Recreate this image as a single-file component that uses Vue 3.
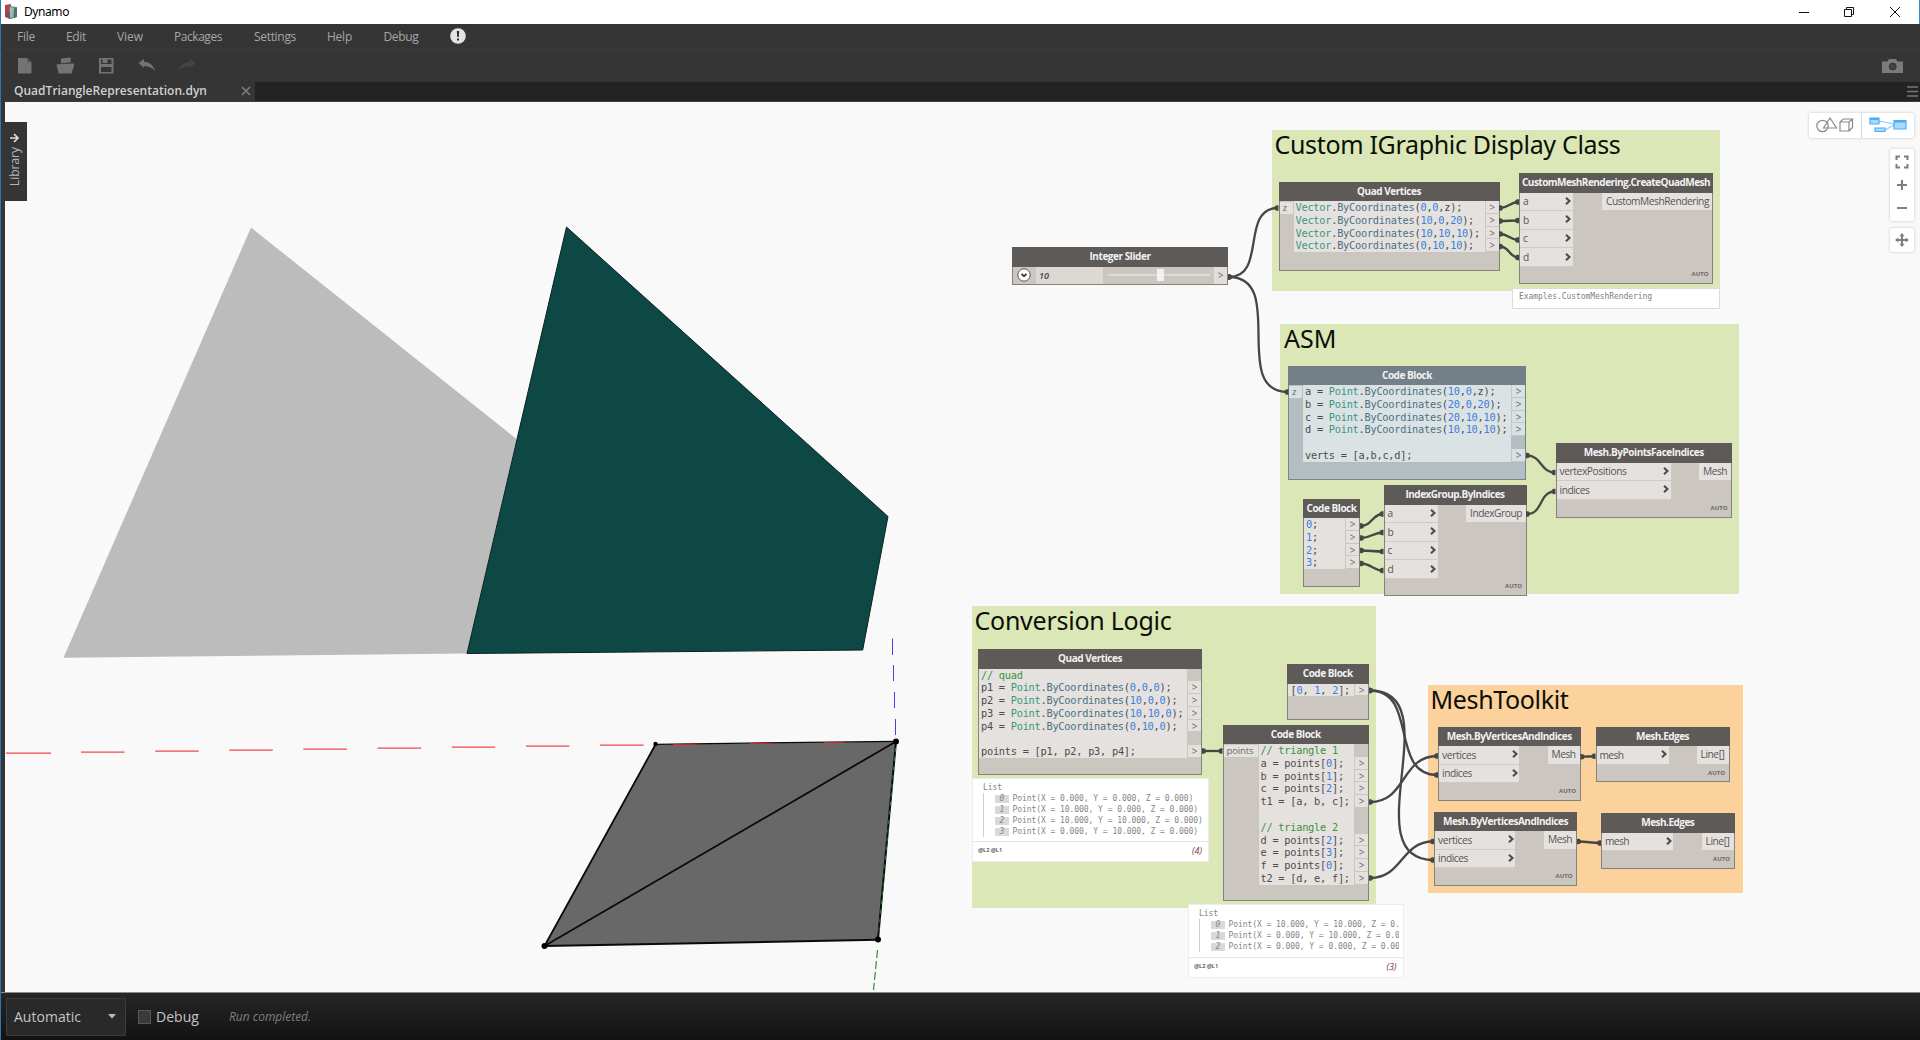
<script setup>
const TOP = 102

const vFit = {
  mounted(el, { value }) {
    if (!value) return
    const width = el.getBoundingClientRect().width
    el.style.letterSpacing = `${(value - width) / el.textContent.length}px`
  }
}

const menu = [
  { t: 'File', x: 17, w: 18 },
  { t: 'Edit', x: 66, w: 20 },
  { t: 'View', x: 117, w: 26 },
  { t: 'Packages', x: 174, w: 48 },
  { t: 'Settings', x: 254, w: 42 },
  { t: 'Help', x: 327, w: 25 },
  { t: 'Debug', x: 383.5, w: 35 }
].map((m, i, all) => ({ ...m, gap: i ? m.x - all[i - 1].x - all[i - 1].w : m.x }))

const groups = [
  { t: 'Custom IGraphic Display Class', x: 1271.5, y: 130, w: 448, h: 161, tw: 346 },
  { t: 'ASM', x: 1280, y: 324, w: 458.5, h: 270, tw: 52.5, pad: 4 },
  { t: 'Conversion Logic', x: 971.5, y: 606, w: 404.5, h: 302, tw: 197 },
  { t: 'MeshToolkit', x: 1427.5, y: 685, w: 315, h: 208, tw: 138, warm: true }
]

const codeNodes = [
  {
    t: 'Quad Vertices', tw: 64, x: 1278.5, y: 181.5, w: 221, h: 89, inW: 14, port: 'z', pad: 2,
    code: ['Vector.ByCoordinates(0,0,z);', 'Vector.ByCoordinates(10,0,20);', 'Vector.ByCoordinates(10,10,10);', 'Vector.ByCoordinates(0,10,10);'],
    outs: [1, 1, 1, 1]
  },
  {
    t: 'Code Block', tw: 50, x: 1288, y: 365.5, w: 238, h: 114.5, inW: 14, port: 'z', pad: 2, selected: true,
    code: ['a = Point.ByCoordinates(10,0,z);', 'b = Point.ByCoordinates(20,0,20);', 'c = Point.ByCoordinates(20,10,10);', 'd = Point.ByCoordinates(10,10,10);', '', 'verts = [a,b,c,d];'],
    outs: [1, 1, 1, 1, 0, 1]
  },
  { t: 'Code Block', tw: 50, x: 1303, y: 498.5, w: 57, h: 88.5, inW: 0, pad: 2, code: ['0;', '1;', '2;', '3;'], outs: [1, 1, 1, 1] },
  {
    t: 'Quad Vertices', tw: 64, x: 978, y: 649, w: 224, h: 126, inW: 0, pad: 2,
    code: ['// quad', 'p1 = Point.ByCoordinates(0,0,0);', 'p2 = Point.ByCoordinates(10,0,0);', 'p3 = Point.ByCoordinates(10,10,0);', 'p4 = Point.ByCoordinates(0,10,0);', '', 'points = [p1, p2, p3, p4];'],
    outs: [0, 1, 1, 1, 1, 0, 1]
  },
  { t: 'Code Block', tw: 50, x: 1286.5, y: 664, w: 82.5, h: 55.5, inW: 0, pad: 3, code: ['[0, 1, 2];'], outs: [1] },
  {
    t: 'Code Block', tw: 50, x: 1222.5, y: 724.5, w: 146.5, h: 176.5, inW: 35, port: 'points', pw: 27, pad: 2,
    code: ['// triangle 1', 'a = points[0];', 'b = points[1];', 'c = points[2];', 't1 = [a, b, c];', '', '// triangle 2', 'd = points[2];', 'e = points[3];', 'f = points[0];', 't2 = [d, e, f];'],
    outs: [0, 1, 1, 1, 1, 0, 0, 1, 1, 1, 1]
  }
]

const fnNodes = [
  { t: 'CustomMeshRendering.CreateQuadMesh', tw: 188, x: 1519, y: 173, w: 194, h: 110.5, inW: 52.5, ins: ['a', 'b', 'c', 'd'], out: 'CustomMeshRendering', ow: 103, outW: 110 },
  { t: 'IndexGroup.ByIndices', tw: 99, x: 1383.5, y: 485, w: 143, h: 110.5, inW: 53, ins: ['a', 'b', 'c', 'd'], out: 'IndexGroup', ow: 52, outW: 59.5 },
  { t: 'Mesh.ByPointsFaceIndices', tw: 120, x: 1555.5, y: 443, w: 176.5, h: 74.5, inW: 114, ins: ['vertexPositions', 'indices'], iw: [67, 30], out: 'Mesh', ow: 24, outW: 32 },
  { t: 'Mesh.ByVerticesAndIndices', tw: 125, x: 1438, y: 726.5, w: 142.5, h: 74, inW: 80, ins: ['vertices', 'indices'], iw: [34, 30], out: 'Mesh', ow: 24, outW: 32 },
  { t: 'Mesh.Edges', tw: 53, x: 1595.5, y: 726.5, w: 134, h: 55.5, inW: 72, ins: ['mesh'], iw: [24], out: 'Line[]', ow: 24, outW: 32 },
  { t: 'Mesh.ByVerticesAndIndices', tw: 125, x: 1434, y: 811.5, w: 143, h: 74, inW: 80, ins: ['vertices', 'indices'], iw: [34, 30], out: 'Mesh', ow: 24, outW: 32 },
  { t: 'Mesh.Edges', tw: 53, x: 1601, y: 813, w: 133.5, h: 55.5, inW: 71, ins: ['mesh'], iw: [24], out: 'Line[]', ow: 24, outW: 32 }
]

const lists = [
  {
    x: 972, y: 778, w: 237, h: 84, n: '(4)',
    rows: ['Point(X = 0.000, Y = 0.000, Z = 0.000)', 'Point(X = 10.000, Y = 0.000, Z = 0.000)', 'Point(X = 10.000, Y = 10.000, Z = 0.000)', 'Point(X = 0.000, Y = 10.000, Z = 0.000)']
  },
  {
    x: 1188, y: 904, w: 215.5, h: 73.500, n: '(3)',
    rows: ['Point(X = 10.000, Y = 10.000, Z = 0.000)', 'Point(X = 0.000, Y = 10.000, Z = 0.000)', 'Point(X = 0.000, Y = 0.000, Z = 0.000)']
  }
]

const wires = [
  [1229, 277, 1278, 208], [1229, 277, 1288, 392],
  [1500, 208, 1518.5, 202], [1500, 221, 1518.5, 220.5], [1500, 234, 1518.5, 240], [1500, 246.5, 1518.5, 257.5],
  [1361, 526, 1383, 514], [1361, 538, 1383, 532.5], [1361, 550.5, 1383, 551.5], [1361, 563.5, 1383, 570.5],
  [1527, 455.5, 1555, 472.5], [1527, 514, 1555, 491.5],
  [1203, 751, 1222, 751],
  [1370, 690.5, 1437.5, 775], [1370, 690.5, 1433.5, 860],
  [1370, 802, 1437.5, 756], [1370, 878, 1433.5, 841.5],
  [1581.5, 756.7, 1595, 756.3], [1578, 841.5, 1600.5, 843]
]

const wirePath = ([x1, y1, x2, y2]) => {
  const d = Math.hypot(x2 - x1, y2 - y1) * 0.45
  return `M${x1} ${y1}C${x1 + d} ${y1} ${x2 - d} ${y2} ${x2} ${y2}`
}

const capPath = ([x1, y1, x2, y2]) =>
  `M${x1 - 1} ${y1 - 2.7}h1.3a2.7 2.7 0 0 1 0 5.4h-1.3zM${x2 + 0.5} ${y2 - 2.7}h-1.3a2.7 2.7 0 0 0 0 5.4h1.3z`

const redDashes = Array.from({ length: 9 }, (_, i) => ({
  x1: i ? 81 + (i - 1) * 74.15 : 6,
  x2: i ? 124.5 + (i - 1) * 74.15 : 51,
  y: 753.5 - i
}))

const tokens = (line) =>
  (line.match(/\/\/.*|\b\d+\b|\bPoint\b|\bVector\b|ByCoordinates|\w+|[^\w]/g) || []).map((s) => ({
    s,
    c: s.startsWith('//') ? 'cm' : /^\d+$/.test(s) ? 'num' : s === 'Point' || s === 'Vector' ? 'cls' : s === 'ByCoordinates' ? 'fn' : ''
  }))

const box = (o) => ({ left: `${o.x}px`, top: `${o.y - TOP}px`, width: `${o.w}px`, height: `${o.h}px` })
const px = (n) => ({ width: `${n}px` })
</script>

<template>
  <div class="app">
    <header class="titlebar">
      <svg class="logo" width="13" height="16" viewBox="0 0 13 16">
        <path d="M0 1l6-1v15l-6-2z" fill="#b9423f" />
        <path d="M4 2l8 1v10l-6 2-2-2z" fill="#5f8d86" />
        <path d="M5 3l4 1-1 9-3 1z" fill="#9dbcae" />
        <path d="M1 9l4-1v7l-4-2z" fill="#7c4d63" />
        <path d="M9 4l3 0v9l-3 1z" fill="#54716f" />
      </svg>
      <span v-fit="45" class="app-name">Dynamo</span>
      <span class="grow"></span>
      <svg class="win" width="102" height="12" viewBox="0 0 102 12" fill="none" stroke="#111">
        <path d="M0 6.500h10" />
        <path d="M45.500 3.500h7v7h-7zM47.500 3.500v-2h7v7h-2" />
        <path d="M91 1l10 10M101 1L91 11" />
      </svg>
    </header>

    <nav class="menubar">
      <span v-for="m in menu" :key="m.t" class="menu-slot" :style="{ paddingLeft: m.gap + 'px', width: m.gap + m.w + 'px' }">
        <span v-fit="m.w">{{ m.t }}</span>
      </span>
      <svg class="alert" width="16" height="16" viewBox="0 0 16 16">
        <circle cx="8" cy="8" r="7.800" fill="#e3e3e3" />
        <path d="M6.800 3h2.400l-.4 6H7.200zM7 10.400h2v2H7z" fill="#2e2e2e" />
      </svg>
    </nav>

    <div class="toolbar">
      <svg width="180" height="18" viewBox="17 57 180 18" fill="#737373">
        <path d="M18 58h9l4.500 4.500V73.500H18z" />
        <path d="M27.300 58v4.300h4.200z" fill="#555" />
        <path d="M61 58.500l9.500-1 .5 5-10 1z" />
        <path d="M56.500 64.500l4-.5 13.500-.5V66l-2.500 7.500H58.500z" />
        <path d="M60 63.600l11-.8" stroke="#444" stroke-width=".7" />
        <path fill-rule="evenodd" d="M99 58h14.500v15.500H99zM101 59.500v4.500h10.500v-4.500zM101 67v5h10.500v-5z" />
        <path d="M102.500 59h5v4h-5z" />
        <path d="M138.500 63l5.500-4v2.700c6 .3 9.500 4 11.500 9.800-3-3.800-6.500-5.300-11.500-5.300V68z" />
        <path d="M195.500 63l-5.500-4v2.700c-6 .3-9.500 4-11.500 8.300 3-2.300 6.500-3.800 11.500-3.800V68z" fill="#444" />
      </svg>
      <span class="grow"></span>
      <svg class="camera" width="22" height="15" viewBox="0 0 22 15">
        <path d="M0 2.500h5.500L7 0h7l1.500 2.500H21V14H0z" fill="#7b7b7b" />
        <circle cx="10.700" cy="7.500" r="3.800" fill="#353535" />
        <circle cx="10.700" cy="7.500" r="2.600" fill="#444" />
      </svg>
    </div>

    <div class="tabs">
      <div class="tab">
        <span v-fit="193">QuadTriangleRepresentation.dyn</span>
        <svg width="10" height="10" viewBox="0 0 10 10"><path d="M1 1l8 8M9 1L1 9" stroke="#7d7d7d" stroke-width="1.600" /></svg>
      </div>
      <span class="grow"></span>
      <svg class="burger" width="11" height="11" viewBox="0 0 11 11"><path d="M0 1h11M0 5.500h11M0 10h11" stroke="#777" stroke-width="1.500" /></svg>
    </div>

    <main class="canvas">
      <svg class="scene" width="1920" height="890" viewBox="0 102 1920 890">
        <path d="M251 227.500L516.500 439 467 653.500 63.500 657.700z" fill="#bcbcbc" />
        <path d="M566.500 227L888 516.500 862.700 650 467 653.500z" fill="#0d4844" stroke="#0a2322" stroke-width="1" />
        <path d="M655.500 744.500L896 741.500 878 939.500 544.500 946z" fill="#686868" />
        <g fill="none" stroke="#0a0a0a">
          <path d="M655.500 744.500L544.500 946M544.500 946L896 741.500" stroke-width="1.800" />
          <path d="M544.500 946L878 939.800" stroke-width="2" />
          <path d="M655.500 744.300L896 741.300" stroke-width="1.200" />
          <path d="M896 741.500L878 939.500" stroke-width="2" />
        </g>
        <path d="M895.500 748L878.500 936" stroke="#1f8a2a" stroke-width="1" stroke-dasharray="4 5" />
        <path d="M877.500 950L873.500 990" stroke="#2c8f37" stroke-width="1.200" stroke-dasharray="8 3" />
        <g stroke="#f0484a" stroke-width="1.200">
          <path v-for="d in redDashes" :key="d.x1" :d="`M${d.x1} ${d.y - 0.3}H${d.x2}`" />
          <path d="M673 744.500h24M750 743.500h21M824 742.500h21" stroke="#d81f22" />
        </g>
        <path d="M892.500 638.500v16.500M893.500 665v16M894.500 692v16M895.500 719v16" stroke="#4a42e0" />
        <circle cx="655.500" cy="744" r="2.200" />
        <circle cx="896" cy="741.500" r="3" />
        <circle cx="878" cy="939.500" r="3" />
        <circle cx="544.500" cy="946" r="3" />
      </svg>

      <section v-for="g in groups" :key="g.t" class="group" :class="{ warm: g.warm }" :style="box(g)">
        <h2 :style="{ paddingLeft: (g.pad || 3) + 'px' }"><span v-fit="g.tw">{{ g.t }}</span></h2>
      </section>

      <div class="preview" :style="box({ x: 1511.5, y: 287.5, w: 208, h: 21 })">
        <span v-fit="133">Examples.CustomMeshRendering</span>
      </div>

      <article v-for="(l, i) in lists" :key="i" class="list" :style="box(l)">
        <div class="list-body">
          <div class="list-title">List</div>
          <div class="list-rows">
            <div v-for="(r, k) in l.rows" :key="k" class="list-row"><i>{{ k }}</i><span>{{ r }}</span></div>
          </div>
        </div>
        <div class="list-foot"><b>@L2 @L1</b><em>{{ l.n }}</em></div>
      </article>

      <svg class="scene" width="1920" height="890" viewBox="0 102 1920 890">
        <path v-for="(w, i) in wires" :key="i" :d="wirePath(w)" fill="none" stroke="#464644" stroke-width="2.300" />
      </svg>

      <article class="node" :style="box({ x: 1012, y: 247, w: 216, h: 37.5 })">
        <h3><span v-fit="61">Integer Slider</span></h3>
        <div class="slider">
          <svg class="expander" width="14" height="14" viewBox="0 0 14 14">
            <circle cx="7" cy="7" r="6.200" fill="#fff" stroke="#555" />
            <path d="M4.500 6l2.500 2.200L9.500 6" fill="none" stroke="#333" stroke-width="1.700" />
          </svg>
          <span class="value">10</span>
          <span class="track"><span class="thumb"></span></span>
          <span class="out-port">&gt;</span>
        </div>
      </article>

      <article v-for="(n, i) in codeNodes" :key="'c' + i" class="node" :class="{ selected: n.selected }" :style="box(n)">
        <h3><span v-fit="n.tw">{{ n.t }}</span></h3>
        <div class="code-body">
          <div v-if="n.inW" class="code-in" :style="px(n.inW)"><div><span v-fit="n.pw || 0">{{ n.port }}</span></div></div>
          <div class="code">
            <div v-for="(line, k) in n.code" :key="k" class="line" :style="{ paddingLeft: n.pad + 'px' }"><span v-for="(t, j) in tokens(line)" :key="j" :class="t.c">{{ t.s }}</span></div>
          </div>
          <div class="code-out">
            <span v-for="(o, k) in n.outs" :key="k" :class="{ blank: !o }">{{ o ? '>' : '' }}</span>
          </div>
        </div>
      </article>

      <article v-for="(n, i) in fnNodes" :key="'f' + i" class="node" :style="box(n)">
        <h3><span v-fit="n.tw">{{ n.t }}</span></h3>
        <div class="fn-body">
          <div class="ins" :style="px(n.inW)">
            <div v-for="(p, k) in n.ins" :key="p" class="in">
              <span v-fit="n.iw ? n.iw[k] : 0">{{ p }}</span>
              <svg width="6" height="8" viewBox="0 0 6 8"><path d="M1 .8L4.500 4 1 7.200" fill="none" stroke="#4b4b4b" stroke-width="2.100" /></svg>
            </div>
          </div>
          <div class="out" :style="px(n.outW)"><span v-fit="n.ow">{{ n.out }}</span></div>
        </div>
        <span class="auto">AUTO</span>
      </article>

      <svg class="scene" width="1920" height="890" viewBox="0 102 1920 890">
        <path v-for="(w, i) in wires" :key="i" :d="capPath(w)" fill="#464644" />
      </svg>

      <aside class="library">
        <span>Library</span>
        <svg width="9" height="10" viewBox="0 0 9 10"><path d="M0 5h7.500M4 1l4 4-4 4" fill="none" stroke="#ddd" stroke-width="1.700" /></svg>
      </aside>

      <div class="view-tools">
        <div class="toggle">
          <span>
            <svg width="38" height="16" viewBox="0 0 38 16" fill="none" stroke="#8a8a8a" stroke-width="1.200">
              <circle cx="6.500" cy="9" r="5.700" />
              <path d="M14 1L7.500 11H20.500z" />
              <path d="M24 5h9v9h-9zM24 5l3.500-3H36.500L33 5M36.500 2v8.500L33 14" />
            </svg>
          </span>
          <span class="active">
            <svg width="38" height="16" viewBox="0 0 38 16" fill="#a9d9ff" stroke="#49aef7" stroke-width="1.200">
              <path d="M10 4l15 3M16 13l9-5" fill="none" stroke="#8ccbfb" />
              <path d="M1 1h9v6H1zM6 11h10v3.500H6z" />
              <path d="M25 3.500h12v8.500H25z" />
              <path d="M25 4.500h12M1 2h9" stroke-width="2" />
            </svg>
          </span>
        </div>
        <div class="zoom">
          <svg width="14" height="14" viewBox="0 0 14 14"><path d="M1.500 5V1.500H5M9 1.500h3.500V5M12.500 9v3.500H9M5 12.500H1.500V9" /></svg>
          <svg width="12" height="12" viewBox="0 0 12 12"><path d="M1 6h10M6 1v10" /></svg>
          <svg width="12" height="12" viewBox="0 0 12 12"><path d="M1 6h10" /></svg>
        </div>
        <div class="pan">
          <svg width="14" height="14" viewBox="0 0 14 14">
            <path d="M2 7h10M7 2v10" />
            <path d="M7 0l2.600 3.300H4.400zM7 14l2.600-3.300H4.400zM0 7l3.300-2.600v5.200zM14 7l-3.300-2.600v5.200z" fill="#7d7d7d" stroke="none" />
          </svg>
        </div>
      </div>
    </main>

    <footer class="status">
      <div class="select">
        <span v-fit="67">Automatic</span>
        <svg width="8" height="5" viewBox="0 0 8 5"><path d="M0 0h8L4 4.500z" fill="#bbb" /></svg>
      </div>
      <span class="check"></span>
      <span v-fit="43" class="debug">Debug</span>
      <span v-fit="82" class="run">Run completed.</span>
    </footer>
  </div>
</template>

<style>
body {
  overflow: hidden;
}
</style>

<style scoped>
.app {
  display: flex;
  flex-direction: column;
  width: 1920px;
  height: 1040px;
  box-sizing: border-box;
  font-family: "Open Sans", "Noto Sans", sans-serif;
  background: #353535;
  overflow: hidden;
}
.app * {
  box-sizing: border-box;
}
.app span {
  white-space: nowrap;
}
.grow {
  flex: 1;
}
.titlebar {
  display: flex;
  align-items: center;
  height: 24px;
  padding-left: 4px;
  padding-bottom: 1px;
  background: #fff;
  border-left: 1px solid #2f77ac;
  border-right: 1px solid #3a8cc8;
}
.app-name {
  margin-left: 6px;
  font: 12px "Noto Sans", sans-serif;
  color: #000;
}
.win {
  margin-right: 18px;
}
.menubar {
  display: flex;
  align-items: center;
  height: 26px;
  padding-bottom: 1px;
  border-left: 1px solid #2f77ac;
  border-bottom: 1px solid #3b3b3b;
  font-size: 12px;
  color: #a6a6a6;
}
.menu-slot {
  flex: none;
}
.menu-slot:first-child {
  margin-left: -1px;
}
.alert {
  margin-left: 31px;
}
.toolbar {
  display: flex;
  align-items: center;
  height: 32px;
  padding: 0 16px 0 16px;
  border-left: 1px solid #2f77ac;
}
.tabs {
  display: flex;
  align-items: center;
  height: 20px;
  padding-right: 2px;
  background: #232323;
  border-left: 1px solid #2f77ac;
  border-bottom: 1px solid #3c3c3c;
}
.tab {
  display: flex;
  align-items: center;
  justify-content: space-between;
  width: 254px;
  height: 19px;
  padding: 0 4px 2px 13px;
  background: #353535;
  font-size: 12px;
  font-weight: 600;
  color: #d0d0d0;
}
.canvas {
  position: relative;
  flex: none;
  height: 890px;
  background: linear-gradient(90deg, #2f77ac 0 1px, #353535 1px 5px, #f9f9f9 5px);
  overflow: hidden;
}
.scene {
  position: absolute;
  left: 0;
  top: 0;
}
.group {
  position: absolute;
  background: #dbe7b6;
}
.group.warm {
  background: #fcd29c;
}
.group h2 {
  margin: 0;
  font-family: "Noto Sans", sans-serif;
  font-size: 25px;
  line-height: 28px;
  font-weight: 400;
  color: #0c0f06;
}
.node {
  position: absolute;
  display: flex;
  flex-direction: column;
  border: 1px solid #85827b;
  background: #cbc6bf;
}
.node h3 {
  flex: none;
  margin: -1px -1px 0;
  height: 19.5px;
  font-size: 10px;
  line-height: 19.5px;
  font-weight: 700;
  text-align: center;
  color: #f2f2f2;
  background: #5d5a58;
}
.node.selected {
  background: #b3bdc2;
  border-color: #76858b;
}
.node.selected h3 {
  background: #738087;
}
.code-body {
  display: flex;
  align-items: flex-start;
}
.code-in div {
  margin-top: 1px;
  margin-right: 1px;
  height: 12px;
  padding-left: 3px;
  background: #e5e1de;
  font-size: 9.6px;
  line-height: 11px;
  color: #6a6a6a;
}
.code {
  flex: 1;
  background: #e5e1df;
}
.selected .code {
  background: #dbe2e4;
}
.selected .code-in div,
.selected .code-out span {
  background: #d9e1e4;
}
.line {
  height: 12.8px;
  line-height: 13.4px;
  font-family: "DejaVu Sans Mono", monospace;
  font-size: 10.3px;
  letter-spacing: -0.25px;
  white-space: pre;
  color: #4c4c4c;
}
.app .line span {
  white-space: pre;
}
.num {
  color: #3b80dc;
}
.cls {
  color: #379680;
}
.fn {
  color: #4b7183;
}
.cm {
  color: #3a943a;
}
.code-out {
  width: 14px;
  display: flex;
  flex-direction: column;
}
.code-out span {
  height: 12.8px;
  border-left: 1px solid #cbc6bf;
  border-bottom: 1px solid #cbc6bf;
  background: #e5e1df;
  font-size: 10px;
  line-height: 12px;
  text-align: center;
  color: #666;
}
.app .code-out .blank {
  background: transparent;
  border-color: transparent;
}
.fn-body {
  display: flex;
  justify-content: space-between;
  align-items: flex-start;
}
.in {
  display: flex;
  align-items: center;
  justify-content: space-between;
  height: 18.6px;
  padding: 0 1.5px 0 3px;
  background: #e5e1de;
  border-bottom: 1px solid #cfcac5;
  font-size: 10.2px;
  color: #555;
}
.in svg {
  margin-bottom: 1px;
}
.out {
  height: 17.6px;
  padding-left: 4px;
  background: #e5e1de;
  font-size: 10.2px;
  line-height: 17px;
  color: #555;
}
.auto {
  position: absolute;
  right: 3.5px;
  bottom: 4.5px;
  font-size: 6px;
  line-height: 8px;
  font-weight: 700;
  color: #6c6862;
}
.slider {
  flex: 1;
  display: flex;
  align-items: center;
}
.expander {
  margin-left: 4px;
}
.value {
  align-self: stretch;
  width: 67px;
  margin-left: 5px;
  padding-left: 3px;
  font-size: 9px;
  font-style: italic;
  font-weight: 600;
  line-height: 17px;
  color: #444;
  background: #dcd9d3;
}
.track {
  display: flex;
  align-items: center;
  width: 102px;
  height: 2px;
  margin: 0 auto;
  padding-left: 49px;
  background: #dfdcd7;
}
.thumb {
  width: 7px;
  height: 12px;
  flex: none;
  background: #f3f2f0;
}
.out-port {
  align-self: stretch;
  width: 13px;
  font-size: 10px;
  line-height: 17px;
  text-align: center;
  color: #666;
  background: #e2ded9;
}
.preview {
  position: absolute;
  padding-left: 6.5px;
  border: 1px solid #dcdcdc;
  background: #fff;
  font: 8px/16px "DejaVu Sans Mono", monospace;
  color: #808080;
}
.list {
  position: absolute;
  display: flex;
  flex-direction: column;
  background: #fff;
  border: 1px solid #ececec;
  font: 8px/11.1px "DejaVu Sans Mono", monospace;
  letter-spacing: -0.06px;
  color: #858585;
}
.list-body {
  flex: 1;
  padding: 3px 4px 0 10px;
}
.list-rows {
  border-left: 1px solid #cfcfcf;
  overflow: hidden;
}
.list-row {
  display: flex;
  align-items: center;
  height: 11.1px;
  padding-left: 11px;
}
.list-row i {
  flex: none;
  width: 14px;
  height: 8px;
  line-height: 8px;
  text-align: center;
  background: #d9d9d9;
}
.list-row span {
  margin-left: 3.5px;
}
.list-foot {
  display: flex;
  align-items: center;
  justify-content: space-between;
  height: 20px;
  padding: 0 6px 1px 5px;
  border-top: 1px solid #e6e6e6;
  font-family: "Open Sans", sans-serif;
}
.list-foot b {
  font-size: 5.8px;
  font-weight: 600;
  letter-spacing: -0.1px;
  color: #444;
}
.list-foot em {
  font-size: 9px;
  color: #7a2f38;
}
.library {
  position: absolute;
  left: 5px;
  top: 20px;
  width: 21.5px;
  height: 79px;
  display: flex;
  flex-direction: column-reverse;
  align-items: center;
  justify-content: space-between;
  padding: 11px 2px 15px 0;
  background: #353535;
  font-size: 12px;
  line-height: 14px;
  color: #b5b5b5;
}
.library span {
  writing-mode: vertical-rl;
  transform: rotate(180deg);
}
.view-tools {
  position: absolute;
  right: 6px;
  top: 11px;
  display: flex;
  flex-direction: column;
  align-items: flex-end;
}
.view-tools > div {
  background: #fff;
  border-radius: 2px;
  box-shadow: 0 0 3px rgba(0, 0, 0, 0.22);
}
.toggle {
  display: flex;
  width: 105px;
  height: 24.5px;
}
.toggle span {
  flex: 1;
  display: flex;
  align-items: center;
  justify-content: center;
}
.toggle .active {
  border-left: 1px solid #bfe2fb;
}
.zoom {
  display: flex;
  flex-direction: column;
  align-items: center;
  justify-content: space-between;
  width: 24px;
  height: 72px;
  margin-top: 11px;
  padding: 6px 0 7px;
}
.pan {
  display: flex;
  align-items: center;
  justify-content: center;
  width: 24px;
  height: 24.5px;
  margin-top: 7px;
}
.zoom svg,
.pan svg {
  fill: none;
  stroke: #7d7d7d;
  stroke-width: 2;
}
.status {
  flex: 1;
  display: flex;
  align-items: center;
  padding-top: 1px;
  padding-left: 5px;
  border-left: 1px solid #2f77ac;
  background: linear-gradient(#8a8a8a 0 1px, #262626 1px, #121212);
}
.select {
  display: flex;
  align-items: center;
  justify-content: space-between;
  width: 120px;
  height: 38px;
  padding: 0 9px 0 7px;
  border: 1px solid #3c3c3c;
  background: #292929;
  font-size: 14px;
  color: #c4c4c4;
}
.check {
  width: 13px;
  height: 14px;
  margin-left: 12px;
  background: #3a3a3a;
  border: 1px solid #585858;
}
.debug {
  margin-left: 5px;
  font-size: 14px;
  color: #c4c4c4;
}
.run {
  margin-left: 30px;
  font-size: 12px;
  font-style: italic;
  color: #7f7f7f;
}
</style>
